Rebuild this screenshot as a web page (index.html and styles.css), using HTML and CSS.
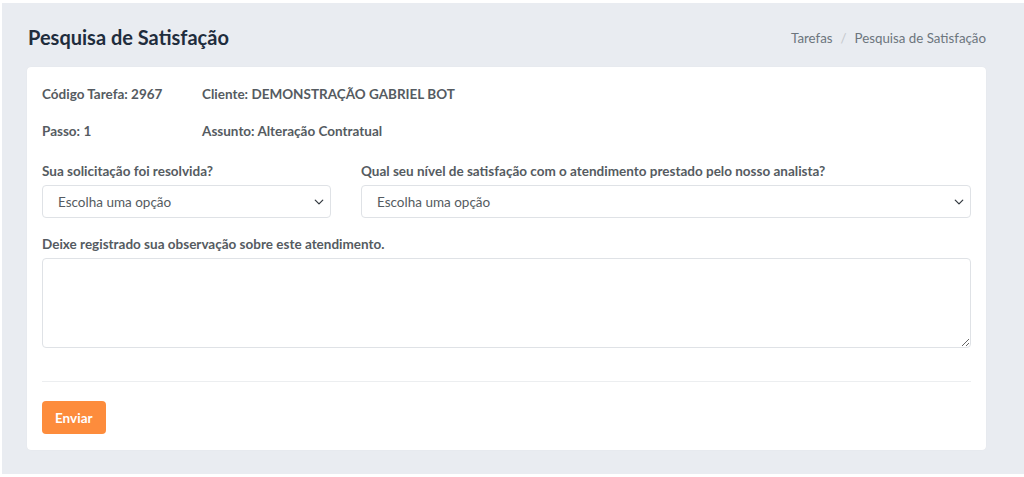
FILE: index.html
```html
<!DOCTYPE html>
<html lang="pt-BR">
<head>
  <meta charset="UTF-8" />
  <meta name="viewport" content="width=device-width, initial-scale=1.0" />
  <title>Pesquisa de Satisfação</title>
  <link rel="stylesheet" href="styles.css">
</head>
<body>
  <div class="page">
    <div class="content-header">
      <h1>Pesquisa de Satisfação</h1>
      <ol class="breadcrumb">
        <li><a href="#">Tarefas</a></li>
        <li class="active">Pesquisa de Satisfação</li>
      </ol>
    </div>

    <div class="card">
      <div class="info-row">
        <span class="info-col">Código Tarefa: 2967</span>
        <span>Cliente: DEMONSTRAÇÃO GABRIEL BOT</span>
      </div>
      <div class="info-row">
        <span class="info-col">Passo: 1</span>
        <span>Assunto: Alteração Contratual</span>
      </div>

      <div class="form-row">
        <div class="field col-4">
          <label>Sua solicitação foi resolvida?</label>
          <div class="select">
            <span>Escolha uma opção</span>
            <svg width="10" height="10" viewBox="0 0 16 16"><path d="M2 5l6 6 6-6" fill="none" stroke="#343a40" stroke-width="2" stroke-linecap="round" stroke-linejoin="round"/></svg>
          </div>
        </div>
        <div class="field col-8">
          <label>Qual seu nível de satisfação com o atendimento prestado pelo nosso analista?</label>
          <div class="select">
            <span>Escolha uma opção</span>
            <svg width="10" height="10" viewBox="0 0 16 16"><path d="M2 5l6 6 6-6" fill="none" stroke="#343a40" stroke-width="2" stroke-linecap="round" stroke-linejoin="round"/></svg>
          </div>
        </div>
      </div>

      <div class="field obs-group">
        <label>Deixe registrado sua observação sobre este atendimento.</label>
        <textarea class="obs"></textarea>
      </div>

      <hr>

      <button class="btn-send">Enviar</button>
    </div>
  </div>
</body>
</html>
```

FILE: styles.css
```css
html, body { margin: 0; height: 100%; }
body { background: #fff; font-family: Lato, "Noto Sans", sans-serif; color: #495057; }
.page { margin: 3px 0 3px 2px; height: 471px; box-sizing: border-box; background: #e9ecf1; padding: 0 38px 0 25px; }

.content-header { display: flex; align-items: center; justify-content: space-between; height: 64px; }
.content-header h1 { margin: 0; font-size: 20px; font-weight: 700; color: #1f2d3d; padding-left: 1px; padding-top: 3px; }
.breadcrumb { display: flex; list-style: none; margin: 0; padding: 6px 0 0; font-size: 13.3px; }
.breadcrumb a { color: #6c757d; text-decoration: none; }
.breadcrumb li.active { color: #6c757d; }
.breadcrumb li + li::before { content: "/"; color: #c4c8cc; padding: 0 8px; }

.card { background: #fff; border-radius: 4px; padding: 15px 15px 16px; box-shadow: 0 0 1px rgba(0,0,0,.08); }

.info-row { display: flex; font-size: 13.5px; font-weight: 700; color: #555b61; height: 37px; line-height: 25px; }
.info-col { width: 160px; }

.form-row { display: flex; gap: 30px; margin-top: 7px; }
.col-4 { width: 289px; flex: none; }
.col-8 { flex: 1; }
.field label { display: block; font-size: 13.5px; font-weight: 700; color: #555b61; margin-bottom: 6px; line-height: 16px; }

.select { display: flex; align-items: center; justify-content: space-between; height: 33px; box-sizing: border-box; border: 1px solid #dfe2e6; border-radius: 4px; padding: 0 6px 0 15px; font-size: 13.5px; color: #555b61; }
.select svg { flex: none; }

.obs-group { margin-top: 18px; }
.obs { display: block; width: 100%; height: 90px; box-sizing: border-box; border: 1px solid #dfe2e6; border-radius: 4px; resize: vertical; font-family: inherit; }

hr { border: none; border-top: 1px solid #eceef0; margin: 33px 0 19px; }

.btn-send { background: #fd8c3c; color: #fff; border: none; border-radius: 4px; padding: 0 13px; height: 33px; font-family: inherit; font-size: 13.5px; font-weight: 700; }
```
